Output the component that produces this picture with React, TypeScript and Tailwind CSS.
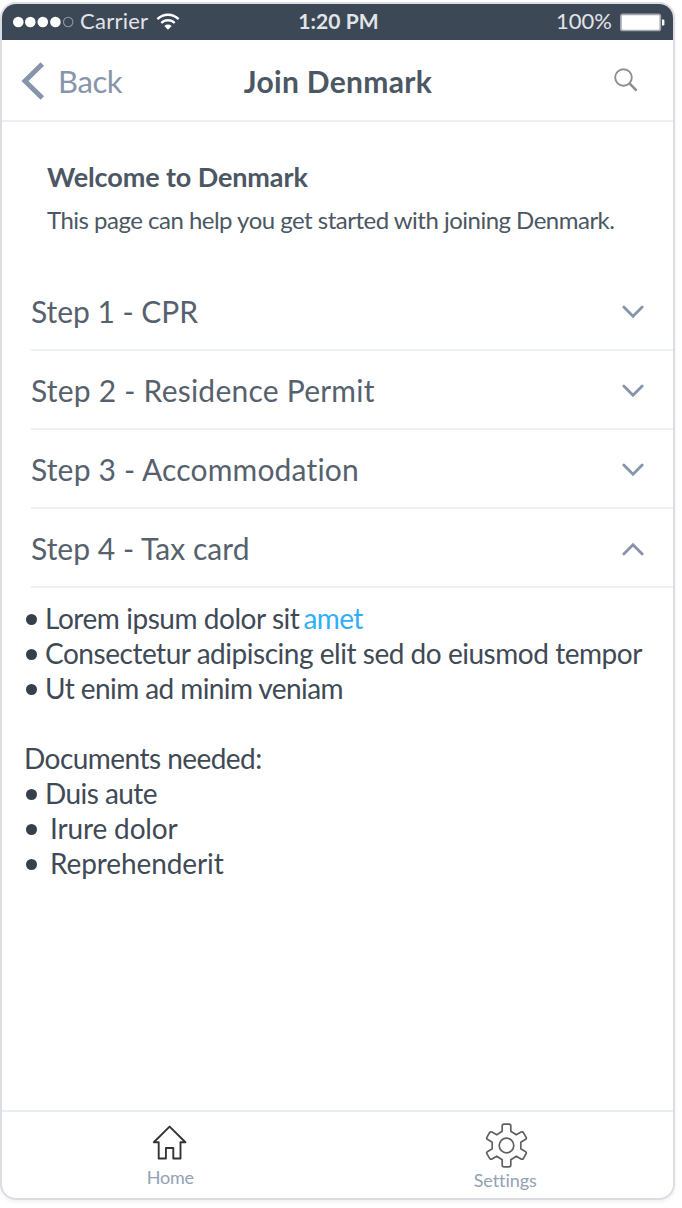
import React from "react";

const steps = [
  { label: "Step 1 - CPR", open: false, cls: "tracking-[-0.02px]" },
  { label: "Step 2 - Residence Permit", open: false, cls: "tracking-[0.23px]" },
  { label: "Step 3 - Accommodation", open: false, cls: "tracking-[0.17px]" },
  { label: "Step 4 - Tax card", open: true, cls: "tracking-[0.04px]" },
];

function StatusBar() {
  return (
    <div className="grid h-[36px] shrink-0 grid-cols-[1fr_auto_1fr] items-center bg-[#3d4857] text-[22px] leading-[34px] text-[#e1e4e8]">
      <div className="flex items-center pl-[11px]">
        <svg width="62" height="14" viewBox="0 0 62 14" className="shrink-0">
          <circle cx="5.3" cy="7" r="5.3" fill="#fff" />
          <circle cx="17.3" cy="7" r="5.3" fill="#fff" />
          <circle cx="29.8" cy="7" r="5.3" fill="#fff" />
          <circle cx="42.4" cy="7" r="5.3" fill="#fff" />
          <circle cx="55.2" cy="7" r="4.7" fill="none" stroke="#9199a3" strokeWidth="1.1" />
        </svg>
        <span className="ml-[5px] pb-[2px] tracking-[0.25px]">Carrier</span>
        <svg width="24" height="18" viewBox="0 0 24 18" className="ml-[8px] shrink-0" fill="none" stroke="#fff">
          <path d="M1.4 6.2a15 15 0 0 1 21.2 0" strokeWidth="2.4" />
          <path d="M5.3 10a9.5 9.5 0 0 1 13.4 0" strokeWidth="2.3" />
          <path d="M8.4 12.9a5.1 5.1 0 0 1 7.2 0L12 16.8Z" fill="#fff" stroke="none" />
        </svg>
      </div>
      <span className="pb-[2px] pl-[2px] text-[21px] font-bold tracking-[0.1px]">1:20 PM</span>
      <div className="flex items-center justify-end pr-[7px]">
        <span className="pb-[2px]">100%</span>
        <svg width="46" height="19" viewBox="0 0 46 19" className="ml-[8px] shrink-0">
          <rect x="0.9" y="1.3" width="39.4" height="16.2" rx="1.8" fill="#fff" stroke="#a3a9b1" strokeWidth="1.7" />
          <path d="M42 6.5h1.2q1.2 0 1.2 1.2v3.6q0 1.2-1.2 1.2H42Z" fill="#fff" />
        </svg>
      </div>
    </div>
  );
}

function Header() {
  return (
    <div className="grid h-[82px] shrink-0 grid-cols-[1fr_auto_1fr] items-center border-b-2 border-[#eceff4]">
      <div className="flex items-center pt-[2px] pl-[19px] text-[#8795ab]">
        <svg width="24" height="38" viewBox="0 0 24 38" className="shrink-0" fill="none" stroke="currentColor" strokeWidth="5">
          <path d="M21.3 2 4 19l17.3 17" />
        </svg>
        <span className="ml-[13px] text-[31px] leading-[40px] tracking-[-0.4px]">Back</span>
      </div>
      <h1 className="pt-px pl-px text-[30px] leading-[40px] font-bold tracking-[0.32px] text-[#4b5763]">
        Join Denmark
      </h1>
      <div className="flex justify-end pr-[35px]">
        <svg width="24" height="24" viewBox="0 0 24 24" className="mb-px" fill="none" stroke="#8e8e8e">
          <circle cx="9.5" cy="9.5" r="8.3" strokeWidth="1.9" />
          <path d="m15.7 15.7 6.9 6.9" strokeWidth="2.6" />
        </svg>
      </div>
    </div>
  );
}

function Bullet({ className, children }: { className: string; children: React.ReactNode }) {
  return (
    <li className="flex items-center">
      <span className="mt-px size-[11px] shrink-0 rounded-full bg-[#35404c]" />
      <span className={className}>{children}</span>
    </li>
  );
}

export default function App() {
  return (
    <div className="h-[1208px] w-[682px] overflow-hidden bg-white pt-[2px] font-['Lato',sans-serif]">
      <div className="flex h-[1198px] w-[675px] flex-col overflow-hidden rounded-[16px] border-2 border-[#dcdde3] bg-white shadow-[0_2px_4px_rgba(0,0,0,0.06)]">
        <StatusBar />
        <Header />

        <section className="mt-[39px] h-[111px] shrink-0 pl-[45px] whitespace-nowrap text-[#4b5763]">
          <h2 className="text-[27px] leading-[32px] font-bold tracking-[-0.1px]">Welcome to Denmark</h2>
          <p className="mt-[11px] text-[24px] leading-[32px] tracking-[-0.51px]">
            This page can help you get started with joining Denmark.
          </p>
        </section>

        <section className="shrink-0 pl-[29px]">
          {steps.map((step) => (
            <button
              key={step.label}
              className="flex h-[79px] w-full items-center justify-between border-b-2 border-[#edf1f5] pt-[2px] pr-[28px] text-left text-[30px] whitespace-nowrap text-[#56616d]"
            >
              <span className={step.cls}>{step.label}</span>
              <svg
                width="24"
                height="16"
                viewBox="0 0 24 16"
                className={step.open ? "rotate-180" : ""}
                fill="none"
                stroke="#8795ab"
                strokeWidth="2.8"
                strokeLinecap="round"
              >
                <path d="m2.8 3 9.2 9.2L21.2 3" />
              </svg>
            </button>
          ))}
        </section>

        <section className="mt-[13px] shrink-0 pl-[22px] text-[28px] leading-[35px] whitespace-nowrap text-[#3f4a56]">
          <ul className="pl-[2px]">
            <Bullet className="ml-[8px] tracking-[-0.45px]">
              Lorem ipsum dolor sit<span className="ml-[4px] tracking-[-0.6px] text-[#2faefa]">amet</span>
            </Bullet>
            <Bullet className="ml-[8px] tracking-[-0.47px]">Consectetur adipiscing elit sed do eiusmod tempor</Bullet>
            <Bullet className="ml-[8px] tracking-[-0.58px]">Ut enim ad minim veniam</Bullet>
          </ul>
          <p className="mt-[35px] tracking-[-0.54px]">Documents needed:</p>
          <ul className="pl-[2px]">
            <Bullet className="ml-[8px] tracking-[-0.55px]">Duis aute</Bullet>
            <Bullet className="ml-[13px] tracking-[-0.15px]">Irure dolor</Bullet>
            <Bullet className="ml-[13px] tracking-[-0.1px]">Reprehenderit</Bullet>
          </ul>
        </section>

        <nav className="mt-auto grid h-[88px] shrink-0 grid-cols-2 border-t-2 border-[#e8eff4] text-[18px] leading-[22px] text-[#93a1b7]">
          <a className="flex flex-col items-center pt-[13px]">
            <svg width="36" height="36" viewBox="0 0 36 36" fill="none" stroke="#333" strokeWidth="1.9" strokeLinejoin="round">
              <path d="M17.6 1.6 1.8 17.2h4.9v16.3h7.2V23h7.4v10.5h7.2V17.2h4.9Z" />
            </svg>
            <span className="mt-[5px] pl-px tracking-[-0.2px]">Home</span>
          </a>
          <a className="flex flex-col items-center pt-[11px]">
            <svg width="44" height="46" viewBox="-23.5 -22.5 44 46" className="overflow-visible" fill="none" stroke="#606060" strokeWidth="1.7" strokeLinejoin="round">
              <circle r="7.3" />
              <path d="M-4.3-14.3V-19.5Q-4.3-21.3-2.5-21.3H2.5Q4.3-21.3 4.3-19.5V-14.3L9.8-10.7 14.5-13.4Q16.1-14.3 17-12.7L19.5-8.4Q20.4-6.8 18.8-5.9L14.3-3.2V3.2L18.8 5.9Q20.4 6.8 19.5 8.4L17 12.7Q16.1 14.3 14.5 13.4L9.8 10.7 4.3 14.3V19.5Q4.3 21.3 2.5 21.3H-2.5Q-4.3 21.3-4.3 19.5V14.3L-9.8 10.7-14.5 13.4Q-16.1 14.3-17 12.7L-19.5 8.4Q-20.4 6.8-18.8 5.9L-14.3 3.2V-3.2L-18.8-5.9Q-20.4-6.8-19.5-8.4L-17-12.7Q-16.1-14.3-14.5-13.4L-9.8-10.7Z" />
            </svg>
            <span className="tracking-[-0.05px]">Settings</span>
          </a>
        </nav>
      </div>
    </div>
  );
}
